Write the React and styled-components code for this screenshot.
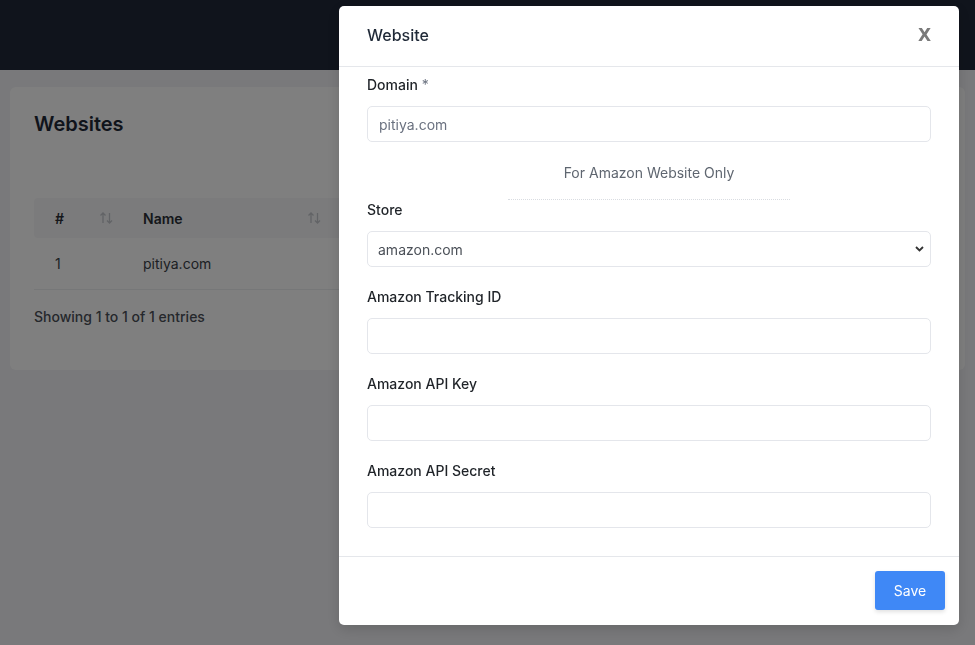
import React from "react";
import styled, { createGlobalStyle } from "styled-components";

const GlobalStyle = createGlobalStyle`
  * { box-sizing: border-box; }
  body {
    margin: 0;
    background: #f2f3f6;
    font-family: Inter, "Liberation Sans", sans-serif;
    font-size: 14px;
  }
`;

const fields = [
  { id: "tracking", label: "Amazon Tracking ID" },
  { id: "apikey", label: "Amazon API Key" },
  { id: "secret", label: "Amazon API Secret" },
];

const SortIcon = () => (
  <svg width="15" height="14" viewBox="0 0 15 14" fill="none" stroke="#c4c7cc" strokeWidth="1.3">
    <path d="M4 12V2M1.5 4.5 4 2l2.5 2.5" />
    <path d="M10.5 2v10M8 9.5l2.5 2.5 2.5-2.5" />
  </svg>
);

const App = () => {
  return (
    <>
      <GlobalStyle />
      <TopBar />
      <Page>
        <Card>
          <CardTitle>Websites</CardTitle>
          <Table>
            <thead>
              <tr>
                <Th $width="88px">
                  <HeadCell>
                    # <SortIcon />
                  </HeadCell>
                </Th>
                <Th $width="208px">
                  <HeadCell>
                    Name <SortIcon />
                  </HeadCell>
                </Th>
                <Th />
              </tr>
            </thead>
            <tbody>
              <tr>
                <Td>1</Td>
                <Td>pitiya.com</Td>
                <Td />
              </tr>
            </tbody>
          </Table>
          <Entries>Showing 1 to 1 of 1 entries</Entries>
        </Card>
      </Page>

      <Overlay />
      <Modal>
        <ModalHeader>
          <ModalTitle>Website</ModalTitle>
          <CloseButton>X</CloseButton>
        </ModalHeader>
        <ModalBody>
          <Field>
            <Label>
              Domain <Required>*</Required>
            </Label>
            <Input defaultValue="pitiya.com" />
          </Field>
          <Note>For Amazon Website Only</Note>
          <Divider />
          <Field>
            <Label>Store</Label>
            <SelectWrap>
              <Select defaultValue="amazon.com">
                <option>amazon.com</option>
              </Select>
              <Chevron width="9" height="6" viewBox="0 0 9 6" fill="none" stroke="#333" strokeWidth="1.8">
                <path d="M1 1l3.5 3.5L8 1" />
              </Chevron>
            </SelectWrap>
          </Field>
          {fields.map((f) => (
            <Field key={f.id}>
              <Label>{f.label}</Label>
              <Input />
            </Field>
          ))}
        </ModalBody>
        <ModalFooter>
          <SaveButton>Save</SaveButton>
        </ModalFooter>
      </Modal>
    </>
  );
};

const TopBar = styled.header`
  height: 70px;
  background: #202838;
`;

const Page = styled.main`
  padding: 17px 10px;
`;

const Card = styled.section`
  background: #fff;
  border-radius: 6px;
  padding: 24px 24px 40px;
  height: 283px;
`;

const CardTitle = styled.h2`
  margin: 0 0 61px;
  font-size: 20px;
  font-weight: 600;
  line-height: 26px;
  color: #1f2937;
`;

const Table = styled.table`
  width: 100%;
  border-collapse: collapse;
`;

const Th = styled.th`
  width: ${(p) => p.$width || "auto"};
  height: 40px;
  padding: 0 8px 0 21px;
  background: #f6f7f9;
  text-align: left;
  font-weight: 600;
  color: #2b2f36;
  &:first-child { border-radius: 4px 0 0 4px; }
`;

const HeadCell = styled.div`
  display: flex;
  align-items: center;
  justify-content: space-between;
`;

const Td = styled.td`
  height: 51px;
  padding: 0 21px;
  color: #3a3f47;
  border-bottom: 1px solid #eceef1;
`;

const Entries = styled.div`
  margin-top: 18px;
  font-weight: 500;
  color: #4b5058;
`;

const Overlay = styled.div`
  position: fixed;
  inset: 0;
  background: rgba(0, 0, 0, 0.5);
`;

const Modal = styled.div`
  position: fixed;
  top: 6px;
  left: 339px;
  width: 620px;
  background: #fff;
  border-radius: 5px;
  box-shadow: 0 4px 14px rgba(0, 0, 0, 0.15);
`;

const ModalHeader = styled.div`
  height: 61px;
  padding: 0 28px 2px;
  display: flex;
  align-items: center;
  justify-content: space-between;
  border-bottom: 1px solid #e5e7eb;
`;

const ModalTitle = styled.h3`
  margin: 0;
  font-size: 16px;
  font-weight: 500;
  color: #1f2937;
`;

const CloseButton = styled.button`
  border: 0;
  padding: 0;
  background: none;
  font-family: "DejaVu Sans", sans-serif;
  font-size: 17px;
  font-weight: 700;
  color: #7a7a7a;
  cursor: pointer;
`;

const ModalBody = styled.div`
  padding: 8px 28px 8px;
`;

const Field = styled.div`
  margin-bottom: 20px;
`;

const Label = styled.label`
  display: block;
  margin-bottom: 11px;
  line-height: 20px;
  font-weight: 500;
  color: #1f2328;
`;

const Required = styled.span`
  color: #6b7280;
  font-weight: 400;
`;

const Input = styled.input`
  display: block;
  width: 100%;
  height: 36px;
  padding: 0 11px;
  border: 1px solid #e4e6eb;
  border-radius: 5px;
  font-family: inherit;
  font-size: 14px;
  color: #6b7280;
  outline: none;
`;

const Note = styled.div`
  margin-top: 21px;
  text-align: center;
  line-height: 20px;
  color: #5f6670;
`;

const Divider = styled.hr`
  width: 50%;
  margin: 16px auto 0;
  border: 0;
  border-top: 1px dotted #d9dce1;
`;

const SelectWrap = styled.div`
  position: relative;
`;

const Select = styled.select`
  display: block;
  width: 100%;
  height: 36px;
  padding: 0 10px;
  border: 1px solid #e4e6eb;
  border-radius: 5px;
  background: #fff;
  appearance: none;
  font-family: inherit;
  font-size: 14px;
  color: #4b5058;
  outline: none;
`;

const Chevron = styled.svg`
  position: absolute;
  right: 7px;
  top: 15px;
  pointer-events: none;
`;

const ModalFooter = styled.div`
  display: flex;
  justify-content: flex-end;
  padding: 14px 14px 15px;
  border-top: 1px solid #e5e7eb;
`;

const SaveButton = styled.button`
  width: 70px;
  height: 39px;
  border: 0;
  border-radius: 3px;
  background: #3f88f6;
  color: #fff;
  font-family: inherit;
  font-size: 14px;
  box-shadow: 0 2px 4px rgba(0, 0, 0, 0.12);
  cursor: pointer;
`;

export default App;
